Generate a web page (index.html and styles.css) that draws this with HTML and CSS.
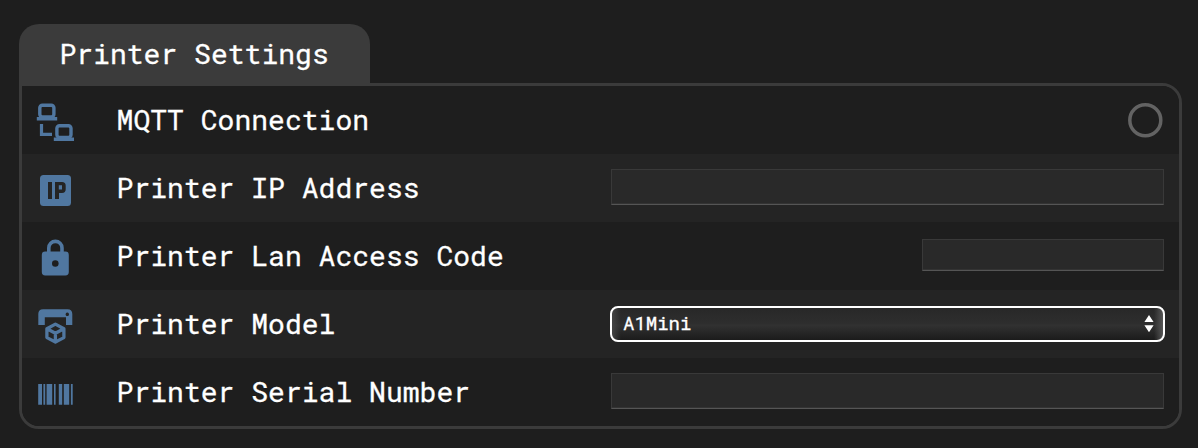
FILE: index.html
```html
<!DOCTYPE html>
<html lang="en">
<head>
<meta charset="utf-8">
<title>Printer Settings</title>
<link rel="stylesheet" href="styles.css">
</head>
<body>
<main class="settings">
  <h1 class="tab">Printer Settings</h1>
  <section class="panel">
    <div class="row">
      <svg class="icon" viewBox="22 86 68 68">
        <g fill="none" stroke="currentColor" stroke-width="3.4">
          <rect x="39.8" y="105.2" width="14.1" height="11.7" rx="2.6"/>
          <rect x="56.9" y="125.7" width="14.1" height="11.7" rx="2.6"/>
          <path d="M41.5 124v10.4H52" stroke-width="3.2"/>
        </g>
        <path d="M36.8 117.1h20.4v3.4H36.8zM53.8 137.6H74v3.4H53.8z"/>
      </svg>
      <span class="label">MQTT Connection</span>
      <svg class="status" viewBox="0 0 36 36"><circle cx="18.3" cy="18.3" r="15.5"/></svg>
    </div>
    <div class="row">
      <svg class="icon" viewBox="22 154 68 68">
        <rect x="40" y="175" width="31" height="31" rx="3.5"/>
        <path class="cut" fill-rule="evenodd" d="M48 182h4v17h-4zM55 182h7q3.7 0 3.7 3.7v3.6q0 3.7-3.7 3.7h-3v6h-4zM58.8 185.3v4.2h3.2v-4.2z"/>
      </svg>
      <label class="label" for="ip">Printer IP Address</label>
      <input class="field" id="ip" type="text">
    </div>
    <div class="row">
      <svg class="icon" viewBox="22 222 68 68">
        <path d="M48.8 253v-5a6.6 6.6 0 0 1 13.2 0v5" fill="none" stroke="currentColor" stroke-width="3.6"/>
        <rect x="41.8" y="251.5" width="27" height="24" rx="3.4"/>
        <circle class="cut" cx="55.3" cy="263.5" r="3.3"/>
      </svg>
      <label class="label" for="code">Printer Lan Access Code</label>
      <input class="field field-short" id="code" type="text">
    </div>
    <div class="row">
      <svg class="icon" viewBox="22 290 68 68">
        <path fill-rule="evenodd" d="M38.3 325v-11q0-4.8 4.8-4.8h24.4q4.8 0 4.8 4.8v11H66v-7.7H44.8v7.7zM67.3 312.6a1.7 1.7 0 1 0 .01 0z"/>
        <path d="M55.4 324.1l8.5 4.6v8.9l-8.5 4.4-8.5-4.4v-8.9zM47 328.8l8.4 4.5 8.4-4.5M55.4 333v9" fill="none" stroke="currentColor" stroke-width="3.3" stroke-linejoin="round"/>
      </svg>
      <label class="label" for="model">Printer Model</label>
      <div class="select" id="model" role="combobox" tabindex="0">
        <span class="value">A1Mini</span>
        <svg class="arrows" viewBox="0 0 10 18"><path d="M5 0l4.6 7H.4zM5 17.2L.4 10.2h9.2z"/></svg>
      </div>
    </div>
    <div class="row">
      <svg class="icon" viewBox="22 358 68 68">
        <path d="M38.2 384H42v20.7h-3.8zM43.4 384h1.8v20.7h-1.8zM46.6 384h5.6v20.7h-5.6zM54 384h1.6v20.7H54zM58.8 384h3.4v20.7h-3.4zM63.8 384h5.4v20.7h-5.4zM70.9 384h1.8v20.7h-1.8z"/>
      </svg>
      <label class="label" for="serial">Printer Serial Number</label>
      <input class="field" id="serial" type="text">
    </div>
  </section>
</main>
</body>
</html>
```
FILE: styles.css
```css
* { box-sizing: border-box; }

body {
  margin: 0;
  background: #1e1e1e;
  color: #fff;
  font-family: "Roboto Mono", "DejaVu Sans Mono", monospace;
  font-weight: 400;
  -webkit-text-stroke: 0.3px #fff;
}

.settings {
  display: flex;
  flex-direction: column;
  padding: 24px 16px 0 19px;
}

.tab {
  width: 351px;
  height: 59px;
  margin: 0;
  padding-left: 40.4px;
  border-radius: 20px 20px 0 0;
  background: #3b3b3b;
  font-size: 28px;
  font-weight: 400;
  letter-spacing: 0.03px;
  line-height: 60px;
  white-space: pre;
}

.panel {
  border: 3px solid #3b3b3b;
  border-radius: 0 20px 20px 20px;
  overflow: hidden;
}

.row {
  --row: #1e1e1e;
  display: flex;
  align-items: center;
  height: 68px;
  padding-right: 15px;
  background: var(--row);
}

.row:nth-child(even) { --row: #242424; }

.icon {
  flex: none;
  width: 68px;
  height: 68px;
  color: #5077a0;
  fill: currentColor;
}

.cut { fill: var(--row); }

.label {
  flex: 1;
  padding-left: 26.6px;
  font-size: 28px;
  letter-spacing: 0.03px;
  line-height: 68px;
  white-space: pre;
}

.status {
  width: 36px;
  height: 36px;
  margin-right: 0.7px;
  fill: none;
  stroke: #636363;
  stroke-width: 3.5;
}

.field {
  width: 553px;
  height: 36px;
  margin: 0 0 2px;
  padding: 0 8px;
  border: 1px solid #393939;
  border-bottom-color: #555;
  border-radius: 0;
  outline: 0;
  background: #292929;
  box-shadow: inset 0 -1px #333;
  color: #fff;
  font: 500 19px "Roboto Mono", monospace;
}

.field-short {
  width: 242px;
  height: 32px;
}

.select {
  display: flex;
  align-items: center;
  justify-content: space-between;
  width: 555px;
  height: 36px;
  margin-right: -1px;
  padding: 0 9.5px 0 11px;
  border: 2px solid #fff;
  border-radius: 8px;
  background:
    linear-gradient(90deg, #444, transparent 9px, transparent calc(100% - 9px), #555),
    linear-gradient(#282828, #2e2e2e 50%, #323232 53%, #2a2a2a 70%, #1b1b1b);
  font-size: 19px;
}

.value { padding-bottom: 3px; }

.arrows {
  width: 10px;
  height: 18px;
  fill: #fff;
}
```
